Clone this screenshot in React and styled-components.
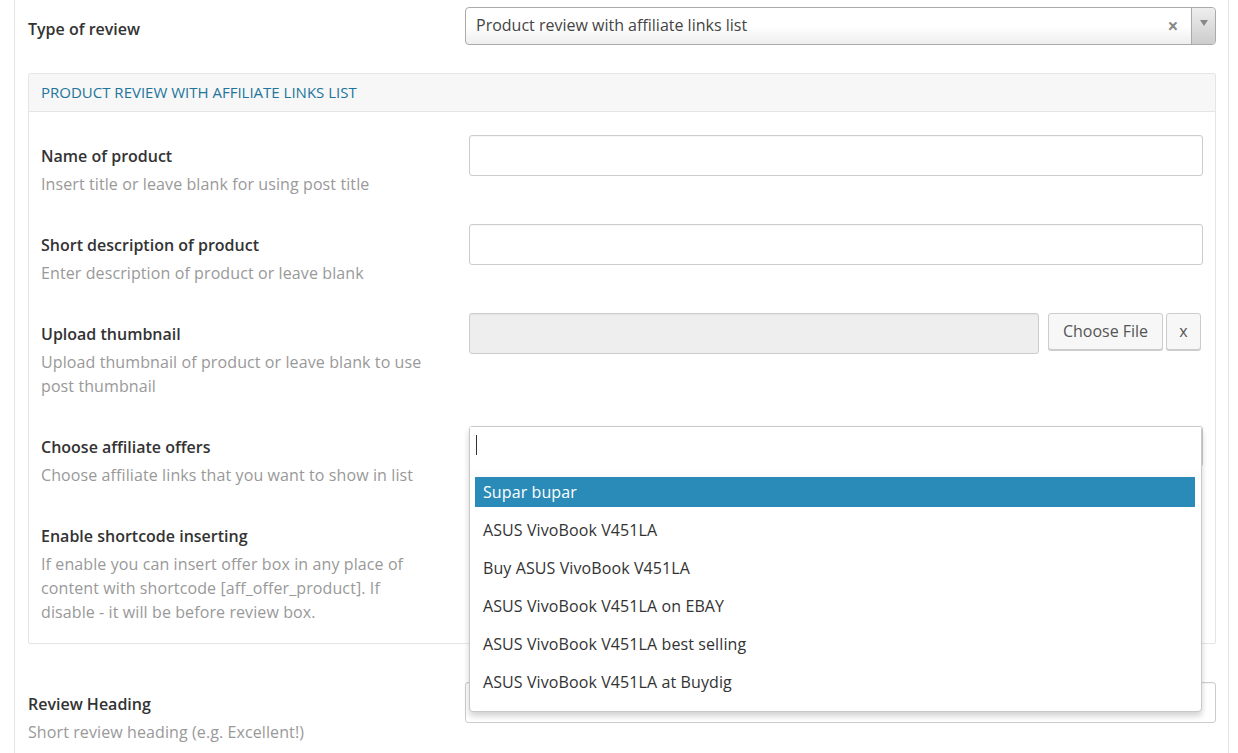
import React from "react";
import styled, { createGlobalStyle } from "styled-components";

const Global = createGlobalStyle`
  html, body { margin: 0; padding: 0; background: #fff; }
  body { font-family: "Open Sans", "DejaVu Sans", sans-serif; color: #333; }
  * { box-sizing: border-box; }
`;

const Frame = styled.div`
  margin-left: 14px;
  width: 1215px;
  min-height: 753px;
  border-left: 1px solid #e5e5e5;
  border-right: 1px solid #e5e5e5;
  padding: 7px 12px 0 13px;
`;

const FieldRow = styled.div`
  display: grid;
  grid-template-columns: ${(p) => p.$labelWidth}px 1fr;
  margin-bottom: ${(p) => p.$gap || 0}px;
`;

const LabelBlock = styled.div`
  padding-top: ${(p) => p.$pad}px;
`;

const Label = styled.div`
  font-size: 16px;
  font-weight: 600;
  line-height: 24px;
  color: #333;
`;

const Desc = styled.div`
  margin-top: 4px;
  font-size: 16px;
  letter-spacing: 0.1px;
  line-height: 24px;
  color: #999;
  max-width: 390px;
`;

const SelectBox = styled.div`
  position: relative;
  height: 38px;
  border: 1px solid #aaa;
  border-radius: 4px;
  background: linear-gradient(to bottom, #ffffff 0%, #ffffff 50%, #eeeeee 100%);
  display: flex;
  align-items: center;
  padding-left: 10px;
  font-size: 16px;
  color: #444;
`;

const SelectText = styled.span`
  flex: 1;
  margin-top: -3px;
`;

const ClearX = styled.span`
  width: 18px;
  margin-right: 9px;
  text-align: center;
  font-size: 19px;
  font-weight: 700;
  color: #888;
  line-height: 1;
`;

const Arrow = styled.span`
  width: 24px;
  align-self: stretch;
  border-left: 1px solid #aaa;
  border-radius: 0 4px 4px 0;
  background: linear-gradient(to bottom, #eeeeee 0%, #cccccc 100%);
  display: flex;
  align-items: center;
  justify-content: center;
  &::after {
    content: "";
    border-left: 4px solid transparent;
    border-right: 4px solid transparent;
    border-top: 6px solid #888;
    margin-top: -6px;
  }
`;

const Panel = styled.div`
  margin-top: 28px;
  border: 1px solid #e5e5e5;
  border-radius: 2px;
  margin-bottom: 38px;
`;

const PanelHead = styled.div`
  height: 38px;
  background: #f7f7f7;
  border-bottom: 1px solid #e5e5e5;
  padding: 0 12px;
  font-size: 15px;
  line-height: 37px;
  color: #21759b;
  text-transform: uppercase;
`;

const PanelBody = styled.div`
  padding: 23px 12px 19px 12px;
`;

const Field = styled.div`
  position: relative;
  display: flex;
  align-items: flex-start;
`;

const TextInput = styled.div`
  flex: 1;
  height: 41px;
  border: 1px solid #ccc;
  border-radius: 3px;
  background: ${(p) => (p.$disabled ? "#eeeeee" : "#fff")};
  box-shadow: inset 0 1px 1px rgba(0, 0, 0, 0.04);
`;

const FileInput = styled(TextInput)`
  flex: 0 0 570px;
`;

const Button = styled.div`
  height: 37px;
  margin-left: ${(p) => p.$ml}px;
  width: ${(p) => p.$w}px;
  border: 1px solid #ccc;
  border-radius: 3px;
  background: #f7f7f7;
  box-shadow: 0 1px 0 #ccc;
  color: #555;
  font-size: 16px;
  display: flex;
  align-items: center;
  justify-content: center;
  padding-bottom: 2px;
`;

const Dropdown = styled.div`
  position: absolute;
  left: 0;
  top: 0;
  width: 733px;
  height: 286px;
  background: #fff;
  border: 1px solid #c8c8c8;
  border-radius: 4px;
  box-shadow: 0 4px 6px rgba(0, 0, 0, 0.18);
  z-index: 5;
`;

const SearchArea = styled.div`
  height: 50px;
  padding: 8px 0 0 6px;
  background: linear-gradient(to bottom, #ffffff 0%, #ffffff 80%, #fafafa 100%);
`;

const Caret = styled.span`
  display: block;
  width: 1px;
  height: 20px;
  background: #333;
`;

const ResultList = styled.ul`
  list-style: none;
  margin: 0;
  padding: 0 6px 0 5px;
`;

const ResultItem = styled.li`
  height: 30px;
  line-height: 30px;
  padding-left: 8px;
  margin-bottom: 8px;
  font-size: 16px;
  letter-spacing: 0.1px;
  color: ${(p) => (p.$active ? "#fff" : "#333")};
  background: ${(p) => (p.$active ? "#2a8bb8" : "transparent")};
`;

const offers = [
  "Supar bupar",
  "ASUS VivoBook V451LA",
  "Buy ASUS VivoBook V451LA",
  "ASUS VivoBook V451LA on EBAY",
  "ASUS VivoBook V451LA best selling",
  "ASUS VivoBook V451LA at Buydig",
];

function Row({ label, desc, children, gap }) {
  return (
    <FieldRow $labelWidth={428} $gap={gap}>
      <LabelBlock $pad={9}>
        <Label>{label}</Label>
        {desc && <Desc>{desc}</Desc>}
      </LabelBlock>
      <Field>{children}</Field>
    </FieldRow>
  );
}

export default function App() {
  return (
    <>
      <Global />
      <Frame>
        <FieldRow $labelWidth={437}>
          <LabelBlock $pad={10}>
            <Label>Type of review</Label>
          </LabelBlock>
          <SelectBox>
            <SelectText>Product review with affiliate links list</SelectText>
            <ClearX>×</ClearX>
            <Arrow />
          </SelectBox>
        </FieldRow>

        <Panel>
          <PanelHead>Product review with affiliate links list</PanelHead>
          <PanelBody>
            <Row
              label="Name of product"
              desc="Insert title or leave blank for using post title"
              gap={28}
            >
              <TextInput />
            </Row>
            <Row
              label="Short description of product"
              desc="Enter description of product or leave blank"
              gap={28}
            >
              <TextInput />
            </Row>
            <Row
              label="Upload thumbnail"
              desc="Upload thumbnail of product or leave blank to use post thumbnail"
              gap={28}
            >
              <FileInput $disabled />
              <Button $ml={9} $w={115}>Choose File</Button>
              <Button $ml={3} $w={35}>x</Button>
            </Row>
            <Row
              label="Choose affiliate offers"
              desc="Choose affiliate links that you want to show in list"
              gap={28}
            >
              <TextInput />
              <Dropdown>
                <SearchArea>
                  <Caret />
                </SearchArea>
                <ResultList>
                  {offers.map((o, i) => (
                    <ResultItem key={o} $active={i === 0}>
                      {o}
                    </ResultItem>
                  ))}
                </ResultList>
              </Dropdown>
            </Row>
            <Row
              label="Enable shortcode inserting"
              desc="If enable you can insert offer box in any place of content with shortcode [aff_offer_product]. If disable - it will be before review box."
            >
              <div />
            </Row>
          </PanelBody>
        </Panel>

        <FieldRow $labelWidth={437}>
          <LabelBlock $pad={10}>
            <Label>Review Heading</Label>
            <Desc>Short review heading (e.g. Excellent!)</Desc>
          </LabelBlock>
          <Field>
            <TextInput />
          </Field>
        </FieldRow>
      </Frame>
    </>
  );
}
